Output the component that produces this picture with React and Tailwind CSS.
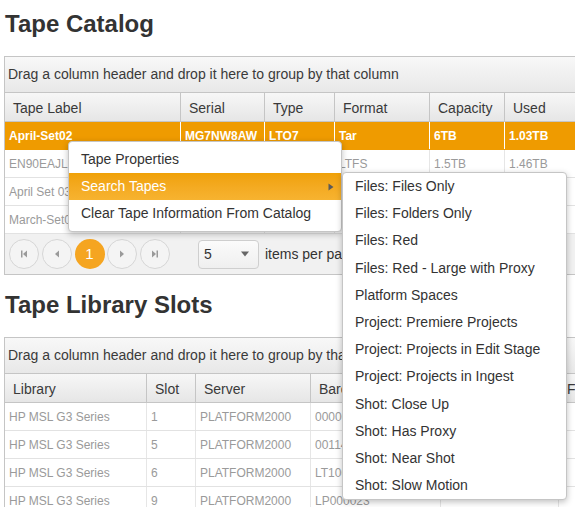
import React from "react";

const grid1Cols = [
  { label: "Tape Label", w: "w-[175px]" },
  { label: "Serial", w: "w-[84px]" },
  { label: "Type", w: "w-[70px]" },
  { label: "Format", w: "w-[95px]" },
  { label: "Capacity", w: "w-[75px]" },
  { label: "Used", w: "w-[120px]" },
];

const grid1Rows = [
  ["April-Set02", "MG7NW8AW", "LTO7", "Tar", "6TB", "1.03TB"],
  ["EN90EAJL", "EN90EAJL", "LTO6", "LTFS", "1.5TB", "1.46TB"],
  ["April Set 03", "MG7NW9AX", "LTO7", "LTFS", "6TB", "2.10TB"],
  ["March-Set01", "MG7NQ2AW", "LTO7", "Tar", "6TB", "4.80TB"],
];

const grid2Cols = [
  { label: "Library", w: "w-[141px]" },
  { label: "Slot", w: "w-[49px]" },
  { label: "Server", w: "w-[115px]" },
  { label: "Barcode", w: "w-[130px]" },
  { label: "Status", w: "w-[118px]" },
  { label: "Format", w: "w-[100px]" },
];

const grid2Rows = [
  ["HP MSL G3 Series", "1", "PLATFORM2000", "000001L6", "", ""],
  ["HP MSL G3 Series", "5", "PLATFORM2000", "001144L6", "", ""],
  ["HP MSL G3 Series", "6", "PLATFORM2000", "LT1001L7", "", ""],
  ["HP MSL G3 Series", "9", "PLATFORM2000", "LP000023", "", ""],
];

const subItems = [
  "Files: Files Only",
  "Files: Folders Only",
  "Files: Red",
  "Files: Red - Large with Proxy",
  "Platform Spaces",
  "Project: Premiere Projects",
  "Project: Projects in Edit Stage",
  "Project: Projects in Ingest",
  "Shot: Close Up",
  "Shot: Has Proxy",
  "Shot: Near Shot",
  "Shot: Slow Motion",
];

function Tri({ dir }) {
  return (
    <svg width="8" height="8" viewBox="0 0 8 8">
      {dir === "first" && (
        <>
          <rect x="1" y="0.5" width="1.5" height="7" fill="#9a9a9a" />
          <path d="M7 0.5 L7 7.5 L3 4 Z" fill="#9a9a9a" />
        </>
      )}
      {dir === "prev" && <path d="M6 0.5 L6 7.5 L2 4 Z" fill="#9a9a9a" />}
      {dir === "next" && <path d="M2 0.5 L2 7.5 L6 4 Z" fill="#9a9a9a" />}
      {dir === "last" && (
        <>
          <path d="M1 0.5 L1 7.5 L5 4 Z" fill="#9a9a9a" />
          <rect x="5.5" y="0.5" width="1.5" height="7" fill="#9a9a9a" />
        </>
      )}
    </svg>
  );
}

function PagerButton({ children, active }) {
  if (active) {
    return (
      <div className="w-[30px] h-[30px] rounded-full bg-[#f5a521] flex items-center justify-center text-white text-[15px] shrink-0">
        {children}
      </div>
    );
  }
  return (
    <div className="w-[30px] h-[30px] rounded-full border border-[#d6d6d6] bg-[#f4f4f4] flex items-center justify-center shrink-0">
      {children}
    </div>
  );
}

function Grid({ cols, rows, selected, pager }) {
  return (
    <div className="w-[660px] border border-[#c5c5c5] bg-white">
      <div className="h-[36px] border-b border-[#c5c5c5] bg-gradient-to-b from-[#f8f8f8] to-[#e8e8e8] flex items-center pl-[3px] text-[14px] text-[#3a3a3a] whitespace-nowrap">
        Drag a column header and drop it here to group by that column
      </div>
      <div className="h-[29px] border-b border-[#c5c5c5] bg-gradient-to-b from-[#f7f7f7] to-[#e6e6e6] flex">
        {cols.map((c, i) => (
          <div
            key={c.label}
            className={`${c.w} shrink-0 flex items-center pt-[2px] pl-[8px] text-[14px] text-[#3a3a3a] whitespace-nowrap ${i > 0 ? "border-l border-[#c5c5c5]" : ""}`}
          >
            {c.label}
          </div>
        ))}
      </div>
      {rows.map((r, ri) => {
        const sel = selected === ri;
        return (
          <div
            key={ri}
            className={`h-[28px] flex border-b ${sel ? "bg-[#ef9b00] border-[#ef9b00]" : "bg-white border-[#e2e2e2]"}`}
          >
            {r.map((cell, ci) => (
              <div
                key={ci}
                className={`${cols[ci].w} shrink-0 flex items-center pl-[4px] text-[12px] whitespace-nowrap overflow-hidden ${sel ? "text-white font-bold" : "text-[#9a9a9a]"} ${ci > 0 ? (sel ? "border-l border-white" : "border-l border-[#e6e6e6]") : ""}`}
              >
                {cell}
              </div>
            ))}
          </div>
        );
      })}
      {pager && (
        <div className="h-[40px] bg-[#f1f1f1] flex items-center pl-[4px]">
          <div className="flex items-center gap-[2.75px]">
            <PagerButton><Tri dir="first" /></PagerButton>
            <PagerButton><Tri dir="prev" /></PagerButton>
            <PagerButton active>1</PagerButton>
            <PagerButton><Tri dir="next" /></PagerButton>
            <PagerButton><Tri dir="last" /></PagerButton>
          </div>
          <div className="ml-[28px] w-[61px] h-[29px] rounded-[4px] border border-[#cfcfcf] bg-gradient-to-b from-[#fbfbfb] to-[#efefef] flex items-center justify-between pl-[5px] pr-[9px] text-[14px] text-[#333]">
            <span>5</span>
            <svg width="8" height="6" viewBox="0 0 8 6">
              <path d="M0 0.5 L8 0.5 L4 5.5 Z" fill="#666" />
            </svg>
          </div>
          <span className="ml-[6px] text-[14px] text-[#333] whitespace-nowrap">items per page</span>
        </div>
      )}
    </div>
  );
}

export default function App() {
  return (
    <div className="relative w-[575px] h-[507px] overflow-hidden bg-white font-['Liberation_Sans',Arial,sans-serif] text-[#333]">
      <div className="pt-[10px] pl-[4px]">
        <h1 className="ml-[1px] text-[24px] leading-[27px] font-bold text-[#333] mb-[19px]">Tape Catalog</h1>
        <Grid cols={grid1Cols} rows={grid1Rows} selected={0} pager />
        <h1 className="ml-[1px] mt-[16px] text-[24px] leading-[27px] font-bold text-[#333] mb-[19px]">Tape Library Slots</h1>
        <Grid cols={grid2Cols} rows={grid2Rows} selected={-1} />
      </div>

      {/* Context menu */}
      <div className="absolute left-[68px] top-[141px] w-[274px] border border-[#c5c5c5] rounded-[4px] bg-white shadow-[0_2px_6px_rgba(0,0,0,0.25)] py-[4px]">
        <div className="h-[27px] flex items-center pl-[12px] text-[14px] text-[#333]">Tape Properties</div>
        <div className="h-[27px] flex items-center justify-between pl-[12px] pr-[7px] text-[14px] text-white bg-gradient-to-b from-[#f0a106] to-[#f7b330]">
          <span>Search Tapes</span>
          <svg width="6" height="8" viewBox="0 0 6 8">
            <path d="M0.5 0.5 L0.5 7.5 L5.5 4 Z" fill="#5a5a5a" />
          </svg>
        </div>
        <div className="h-[27px] flex items-center pl-[12px] text-[14px] text-[#333] whitespace-nowrap">Clear Tape Information From Catalog</div>
      </div>

      {/* Submenu */}
      <div className="absolute left-[342px] top-[172px] w-[225px] border border-[#c5c5c5] rounded-[4px] bg-white shadow-[0_2px_6px_rgba(0,0,0,0.25)]">
        {subItems.map((s) => (
          <div key={s} className="h-[27.2px] flex items-center pl-[12px] text-[14px] text-[#333] whitespace-nowrap">
            {s}
          </div>
        ))}
      </div>
    </div>
  );
}
